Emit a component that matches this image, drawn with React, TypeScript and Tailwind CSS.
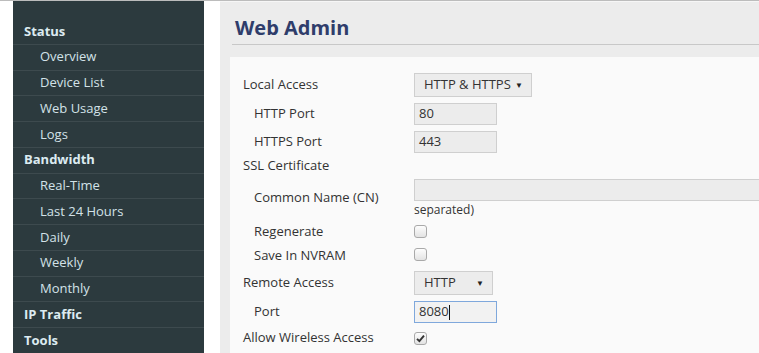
import React from "react";

const side: { t: string; h?: boolean }[] = [
  { t: "Status", h: true },
  { t: "Overview" },
  { t: "Device List" },
  { t: "Web Usage" },
  { t: "Logs" },
  { t: "Bandwidth", h: true },
  { t: "Real-Time" },
  { t: "Last 24 Hours" },
  { t: "Daily" },
  { t: "Weekly" },
  { t: "Monthly" },
  { t: "IP Traffic", h: true },
  { t: "Tools", h: true },
];

function Check({ checked }: { checked?: boolean }) {
  return (
    <div className="w-[13px] h-[13px] rounded-[3px] border border-[#a9a9a9] bg-gradient-to-b from-[#fdfdfd] to-[#e3e3e3] flex items-center justify-center">
      {checked && (
        <svg width="9" height="9" viewBox="0 0 9 9">
          <path d="M1 4.8 L3.4 7.2 L8 1.6" fill="none" stroke="#333" strokeWidth="1.9" />
        </svg>
      )}
    </div>
  );
}

function Select({ text, w }: { text: string; w: string }) {
  return (
    <div className={`${w} h-[24px] border border-[#cfcfcf] bg-[#ececec] flex items-center justify-between pl-[9px] pr-[8px] text-[13px] text-[#333]`}>
      <span>{text}</span>
      <span className="text-[8px] text-[#222]">▼</span>
    </div>
  );
}

function Input({ text, focus }: { text: string; focus?: boolean }) {
  return (
    <div
      className={`w-[83px] h-[22px] border ${focus ? "border-[#7fa8dc] bg-[#f2f2f2]" : "border-[#cfcfcf] bg-[#ececec]"} flex items-center pl-[4px] text-[13px] text-[#333]`}
    >
      <span>{text}</span>
      {focus && <span className="w-px h-[15px] bg-[#111]" />}
    </div>
  );
}

function Row({ label, indent, h, children }: { label: string; indent?: boolean; h: string; children?: React.ReactNode }) {
  return (
    <div className={`flex items-center ${h}`}>
      <div className={`w-[171px] shrink-0 text-[13px] text-[#333] ${indent ? "pl-[11px]" : ""}`}>{label}</div>
      <div className="flex items-center">{children}</div>
    </div>
  );
}

export default function App() {
  return (
    <div
      className="w-[759px] h-[353px] overflow-hidden flex border-t border-[#bcbcbc] bg-white"
      style={{ fontFamily: '"Open Sans", "Noto Sans", sans-serif' }}
    >
      <div className="w-[13px] shrink-0 bg-white" />
      <div className="w-[191px] shrink-0 bg-[#2c3a3e] pt-[18px]">
        {side.map((s) => (
          <div
            key={s.t}
            className={`h-[25.75px] border-b border-[#3d4a4e] flex items-center ${
              s.h ? "pl-[11px] font-bold text-[#dcebf1]" : "pl-[27px] text-[#d3e2e8]"
            } text-[13px]`}
          >
            {s.t}
          </div>
        ))}
      </div>
      <div className="w-[16px] shrink-0 bg-white" />
      <div className="flex-1 bg-[#ececec] border-t border-[#f6f6f6] pl-[10px] min-w-0">
        <div className="ml-[2px] pl-[3px] pt-[12px] pb-[2px] border-b border-[#c8c8c8]">
          <div className="text-[20px] leading-[28px] font-bold text-[#2f3d6b]">Web Admin</div>
        </div>
        <div className="mt-[12px] bg-[#fafafa] h-[400px] pt-[14px] pl-[13px] overflow-hidden">
          <Row label="Local Access" h="h-[28px]">
            <Select text="HTTP & HTTPS" w="w-[118px]" />
          </Row>
          <Row label="HTTP Port" indent h="h-[29px]">
            <Input text="80" />
          </Row>
          <Row label="HTTPS Port" indent h="h-[27px]">
            <Input text="443" />
          </Row>
          <Row label="SSL Certificate" h="h-[22px]" />
          <div className="flex items-center h-[42px]">
            <div className="w-[171px] shrink-0 text-[13px] text-[#333] pl-[11px]">Common Name (CN)</div>
            <div className="flex flex-col pt-[2px] h-full">
              <div className="w-[400px] h-[22px] border border-[#cfcfcf] bg-[#ececec]" />
              <div className="text-[12px] leading-[17px] text-[#333]">separated)</div>
            </div>
          </div>
          <Row label="Regenerate" indent h="h-[25px]">
            <Check />
          </Row>
          <Row label="Save In NVRAM" indent h="h-[24px]">
            <div className="-mt-[4px]">
              <Check />
            </div>
          </Row>
          <Row label="Remote Access" h="h-[30px]">
            <Select text="HTTP" w="w-[79px]" />
          </Row>
          <Row label="Port" indent h="h-[28px]">
            <Input text="8080" focus />
          </Row>
          <Row label="Allow Wireless Access" h="h-[24px]">
            <Check checked />
          </Row>
        </div>
      </div>
    </div>
  );
}
